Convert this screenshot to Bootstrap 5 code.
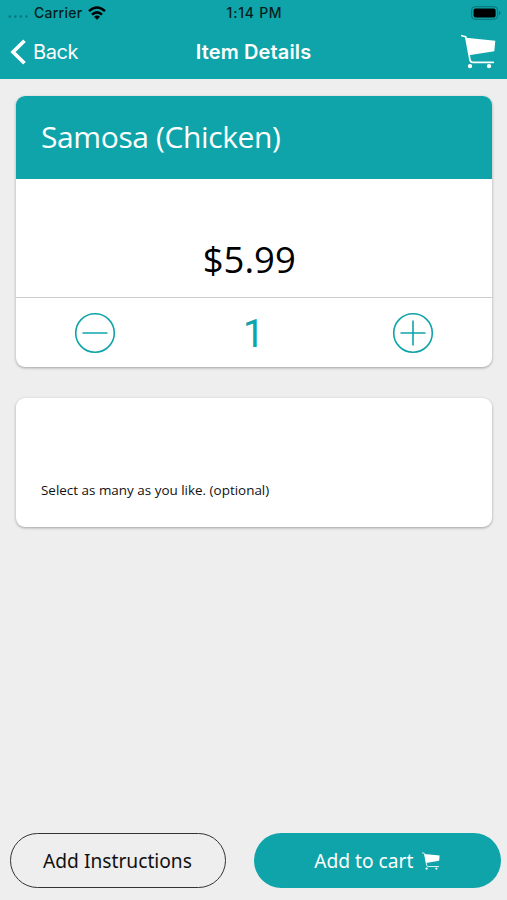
<!DOCTYPE html>
<html lang="en">
<head>
<meta charset="utf-8">
<meta name="viewport" content="width=device-width, initial-scale=1">
<title>Item Details</title>
<link href="https://cdn.jsdelivr.net/npm/bootstrap@5.3.0/dist/css/bootstrap.min.css" rel="stylesheet">
<style>
:root { --teal: #0ea4a9; }
body { background: #eee; font-family: "Open Sans", "Noto Sans", sans-serif; color: #111; }
svg { display: block; flex: none; }
.text-teal { color: var(--teal); }
.app-header { background: var(--teal); height: 79px; font-family: Inter, Roboto, sans-serif; }
.three-col { display: grid; grid-template-columns: 1fr auto 1fr; align-items: center; }
.status-bar { height: 26px; padding: 0 6px 0 8px; font-size: 14px; font-weight: 500; color: #031e20; line-height: 1; }
.carrier { letter-spacing: .25px; }
.wifi { margin-left: 6px; }
.clock { letter-spacing: .75px; }
.title-bar { height: 53px; padding: 0 11px 2px 10px; color: #fff; }
.back-link { font-size: 20px; line-height: 1; letter-spacing: -.45px; }
.back-link span { margin-left: 6px; }
.page-title { font-size: 20px; line-height: 1; font-weight: 600; letter-spacing: .13px; padding-left: 1px; }
.item-list { padding: 17px 15px 0 15.5px; gap: 31px; }
.item-card { border: 0; border-radius: 9px; overflow: hidden; box-shadow: 0 1px 3px rgba(0,0,0,.32); }
.item-name { background: var(--teal); color: #fff; height: 83px; padding: 0 25.5px 1px; border: 0; font-size: 30px; font-weight: 400; line-height: 1; letter-spacing: -.38px; }
.item-price { height: 118px; padding: 62px 9px 0 0; font-size: 36.5px; line-height: 1; color: #000; }
.quantity { height: 70px; border-top: 1px solid #ccc; }
.quantity-value { font-family: Roboto, sans-serif; font-weight: 400; font-size: 38px; line-height: 1; padding-top: 2px; }
.option-card { height: 129px; padding: 0 25.5px 28px; font-size: 13.45px; line-height: 17px; }
.actions { padding: 0 6px 12px 9.5px; gap: 28px; }
.action-btn { height: 55px; border-radius: 28px; font-size: 19.2px; line-height: 1; padding: 0; font-family: "Noto Sans", sans-serif; }
.btn-instructions { width: 216px; border: 1.5px solid #333; color: #111; }
.btn-cart { background: var(--teal); color: #fff; gap: 9px; border: 0; }
</style>
</head>
<body>
<svg class="d-none" aria-hidden="true">
  <symbol id="cart" viewBox="0 0 35 35">
    <path d="M.8 1.7 4.7 2.7 9 25.8Q9.5 28.3 12 28.3H32.3" fill="none" stroke="#fff" stroke-width="1.7" stroke-linecap="round" stroke-linejoin="round"/>
    <path d="M4.7 3.7 34.3 6.7 33.3 17.2 8 21.3Z" fill="#fff"/>
    <circle cx="9" cy="32.1" r="2.2" fill="#fff"/><circle cx="28" cy="32.1" r="2.2" fill="#fff"/>
  </symbol>
</svg>
<div class="d-flex flex-column vh-100">
  <header class="app-header">
    <div class="status-bar three-col">
      <div class="d-flex align-items-center">
        <svg width="22" height="14" fill="#0a747a"><circle cx="1.9" cy="10.5" r="1.2"/><circle cx="7.4" cy="10.5" r="1.2"/><circle cx="12.9" cy="10.5" r="1.2"/><circle cx="18.4" cy="10.5" r="1.2"/></svg>
        <span class="carrier ms-1">Carrier</span>
        <svg class="wifi" width="18" height="14" viewBox="0 0 18 14"><g fill="none" stroke="#000" stroke-width="2.5"><path d="M1 5.2Q9-2.2 17 5.2"/><path d="M4 8.6Q9 4.1 14 8.6"/></g><path d="M6 10.7Q9 8.2 12 10.7L9 13.7Z"/></svg>
      </div>
      <span class="clock">1:14 PM</span>
      <svg class="ms-auto" width="30" height="14" viewBox="0 0 30 14"><rect x=".6" y=".7" width="26" height="12.6" rx="3.5" fill="none" stroke="#087277"/><rect x="2.6" y="2.5" width="22" height="9" rx="2"/><path d="M28 5v4q1.4-.6 1.4-2T28 5" fill="#086d72"/></svg>
    </div>
    <div class="title-bar three-col">
      <a href="#" class="back-link d-flex align-items-center text-white text-decoration-none">
        <svg width="17" height="26" viewBox="0 0 17 26"><path d="M14.5 1.7 3 13 14.5 24.3" fill="none" stroke="#fff" stroke-width="3.7"/></svg>
        <span>Back</span>
      </a>
      <span class="page-title">Item Details</span>
      <a href="#" class="ms-auto" aria-label="Cart"><svg width="35" height="35"><use href="#cart"/></svg></a>
    </div>
  </header>
  <main class="item-list d-flex flex-column">
    <section class="card item-card">
      <h1 class="item-name d-flex align-items-center mb-0">Samosa (Chicken)</h1>
      <div class="item-price text-center">$5.99</div>
      <div class="quantity row g-0 align-items-center text-center text-teal">
        <div class="col-4"><svg class="mx-auto" width="42" height="42" fill="none" stroke="currentColor" stroke-width="1.6"><circle cx="21" cy="21" r="19.3"/><path d="M8.5 21h25"/></svg></div>
        <div class="col-4 quantity-value">1</div>
        <div class="col-4"><svg class="mx-auto" width="42" height="42" fill="none" stroke="currentColor" stroke-width="1.6"><circle cx="21" cy="21" r="19.3"/><path d="M8.5 21h25M21 8.5v25"/></svg></div>
      </div>
    </section>
    <section class="card item-card option-card d-flex justify-content-end">Select as many as you like. (optional)</section>
  </main>
  <footer class="actions d-flex mt-auto">
    <button class="btn action-btn btn-instructions">Add Instructions</button>
    <button class="btn action-btn btn-cart d-flex flex-fill align-items-center justify-content-center">Add to cart <svg width="18" height="18"><use href="#cart"/></svg></button>
  </footer>
</div>
<script src="https://cdn.jsdelivr.net/npm/bootstrap@5.3.0/dist/js/bootstrap.bundle.min.js"></script>
</body>
</html>
